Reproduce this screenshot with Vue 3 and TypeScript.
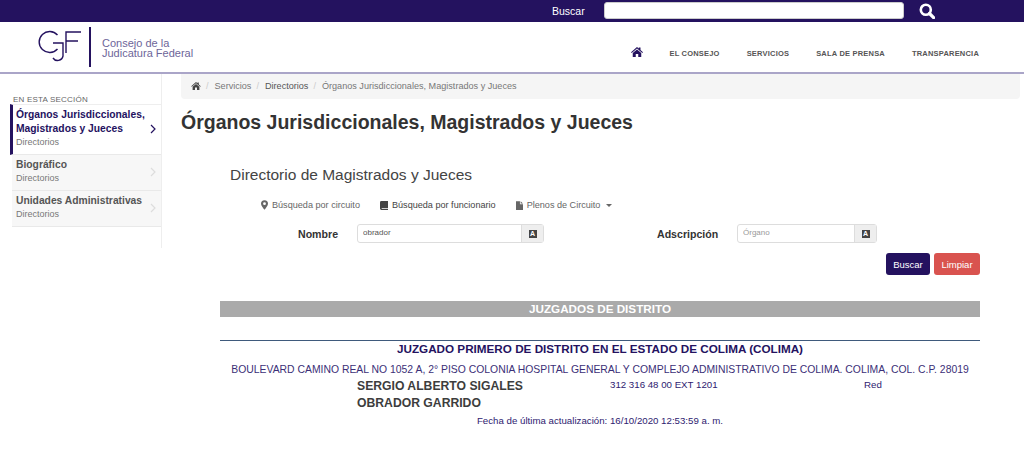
<template>
  <div class="page">
    <!-- Top search bar -->
    <div class="topbar">
      <span class="topbar-label">Buscar</span>
      <input class="topbar-input" type="text" />
      <svg class="topbar-icon" viewBox="0 0 16 16" width="16" height="16">
        <circle cx="6.8" cy="6.8" r="5" fill="none" stroke="#fff" stroke-width="2.6" />
        <path d="M10.5 10.5 L14.6 14.6" stroke="#fff" stroke-width="3.2" stroke-linecap="round" />
      </svg>
    </div>

    <!-- Logo and menu -->
    <header class="header">
      <div class="logo">
        <svg class="logo-mark" viewBox="0 0 46 36" width="46" height="36">
          <path d="M20.5 6 A10.5 10.5 0 1 0 20.5 20 M16 14 H26 V27 A5.5 5.5 0 0 1 16 29" fill="none" stroke="#24125f" stroke-width="1.4" />
          <path d="M29 24 V3 H44 M29 12 H41" fill="none" stroke="#24125f" stroke-width="1.4" />
        </svg>
        <div class="logo-bar"></div>
        <div class="logo-text">Consejo de la<br />Judicatura Federal</div>
      </div>
      <nav class="menu">
        <svg class="menu-home" viewBox="0 0 24 20" width="12" height="10">
          <path d="M12 0 L15.5 3 V1 H19 V6 L24 10.5 L22.6 12 L12 3 L1.4 12 L0 10.5 Z M12 5 L20.5 12 V20 H14.5 V14 H9.5 V20 H3.5 V12 Z" fill="#24125f" />
        </svg>
        <a v-for="item in menu" :key="item" class="menu-item">{{ item }}</a>
      </nav>
    </header>

    <div class="body">
      <!-- Side navigation -->
      <aside class="side">
        <div class="side-title">EN ESTA SECCIÓN</div>
        <div
          v-for="link in links"
          :key="link.name"
          class="side-link"
          :class="{ active: link.active }"
        >
          <div>
            <div class="side-name" v-html="link.name"></div>
            <div class="side-sub">Directorios</div>
          </div>
          <svg class="side-arrow" viewBox="0 0 6 10" width="6" height="10">
            <path d="M1 1 L5 5 L1 9" fill="none" stroke="currentColor" stroke-width="1.2" />
          </svg>
        </div>
      </aside>

      <main class="main">
        <div class="crumbs">
          <svg class="crumb-home" viewBox="0 0 24 20" width="10" height="8">
            <path d="M12 0 L15.5 3 V1 H19 V6 L24 10.5 L22.6 12 L12 3 L1.4 12 L0 10.5 Z M12 5 L20.5 12 V20 H14.5 V14 H9.5 V20 H3.5 V12 Z" fill="#444" />
          </svg>
          <span class="sep">/</span>
          <span>Servicios</span>
          <span class="sep">/</span>
          <span class="dark">Directorios</span>
          <span class="sep">/</span>
          <span>Órganos Jurisdiccionales, Magistrados y Jueces</span>
        </div>

        <h1 class="title">Órganos Jurisdiccionales, Magistrados y Jueces</h1>

        <section class="content">
          <h2 class="subtitle">Directorio de Magistrados y Jueces</h2>

          <div class="tabs">
            <span class="tab">
              <svg viewBox="0 0 8 11" width="7" height="10">
                <path d="M4 0 A4 4 0 0 1 8 4 C8 6 5.5 9 4 11 C2.5 9 0 6 0 4 A4 4 0 0 1 4 0 Z M4 2.4 A1.6 1.6 0 1 0 4 5.6 A1.6 1.6 0 1 0 4 2.4 Z" fill="#666" fill-rule="evenodd" />
              </svg>
              Búsqueda por circuito
            </span>
            <span class="tab strong">
              <svg viewBox="0 0 9 10" width="8" height="9">
                <path d="M1.5 0 H9 V8 H2 A0.8 0.8 0 0 0 2 9 H9 V10 H1.5 A1.5 1.5 0 0 1 0 8.5 V1.5 A1.5 1.5 0 0 1 1.5 0 Z" fill="#444" />
              </svg>
              Búsqueda por funcionario
            </span>
            <span class="tab">
              <svg viewBox="0 0 8 10" width="7" height="9">
                <path d="M0 0 H4.5 V3.5 H8 V10 H0 Z M5.3 0 L8 2.7 H5.3 Z" fill="#666" />
              </svg>
              Plenos de Circuito
              <i class="caret"></i>
            </span>
          </div>

          <div class="form">
            <label class="form-label">Nombre</label>
            <div class="field">
              <input class="field-input" type="text" value="obrador" />
              <span class="field-addon"><b class="az">A</b></span>
            </div>
            <label class="form-label second">Adscripción</label>
            <div class="field">
              <input class="field-input" type="text" placeholder="Órgano" />
              <span class="field-addon"><b class="az">A</b></span>
            </div>
          </div>

          <div class="actions">
            <button class="btn primary">Buscar</button>
            <button class="btn danger">Limpiar</button>
          </div>

          <div class="band">JUZGADOS DE DISTRITO</div>

          <div class="court">
            <h3 class="court-name">JUZGADO PRIMERO DE DISTRITO EN EL ESTADO DE COLIMA (COLIMA)</h3>
            <p class="court-address">BOULEVARD CAMINO REAL NO 1052 A, 2° PISO COLONIA HOSPITAL GENERAL Y COMPLEJO ADMINISTRATIVO DE COLIMA. COLIMA, COL. C.P. 28019</p>
            <div class="person">
              <div class="person-name">SERGIO ALBERTO SIGALES<br />OBRADOR GARRIDO</div>
              <div class="person-phone">312 316 48 00 EXT 1201</div>
              <div class="person-net">Red</div>
            </div>
            <p class="court-date">Fecha de última actualización: 16/10/2020 12:53:59 a. m.</p>
          </div>
        </section>
      </main>
    </div>
  </div>
</template>

<script setup lang="ts">
interface SideLink {
  name: string
  active?: boolean
}

const menu: string[] = ['EL CONSEJO', 'SERVICIOS', 'SALA DE PRENSA', 'TRANSPARENCIA']

const links: SideLink[] = [
  { name: 'Órganos Jurisdiccionales,<br>Magistrados y Jueces', active: true },
  { name: 'Biográfico' },
  { name: 'Unidades Administrativas' }
]
</script>

<style>
html,
body {
  margin: 0;
  background: #fff;
}
</style>

<style scoped>
.page {
  width: 1024px;
  height: 459px;
  overflow: hidden;
  font-family: "Liberation Sans", Arial, sans-serif;
  color: #333;
}

/* Top bar */
.topbar {
  height: 22px;
  background: #24125f;
  display: flex;
  align-items: center;
  padding-left: 552px;
  box-sizing: border-box;
}

.topbar-label {
  width: 52px;
  font-size: 10.5px;
  color: #fff;
}

.topbar-input {
  width: 300px;
  height: 17px;
  box-sizing: border-box;
  border: 1px solid #ccc;
  border-radius: 3px;
  background: #fff;
  padding: 0;
  margin-top: -2px;
}

.topbar-icon {
  margin-left: 15px;
}

/* Header */
.header {
  height: 52px;
  box-sizing: border-box;
  border-bottom: 2px solid #aaa5c8;
  display: flex;
  justify-content: space-between;
  padding-left: 37px;
}

.logo {
  display: flex;
  align-items: flex-start;
  padding-top: 5px;
}

.logo-mark {
  margin-top: 2px;
}

.logo-bar {
  width: 2px;
  height: 40px;
  background: #24125f;
  margin-left: 6px;
}

.logo-text {
  margin: 11px 0 0 11px;
  font-size: 11px;
  line-height: 10px;
  color: #6d6599;
}

.menu {
  display: flex;
  align-items: flex-start;
  padding: 26px 45px 0 0;
}

.menu-home {
  width: 12px;
  height: 10px;
  margin: -1px 26px 0 0;
}

.menu-item {
  font-size: 7.5px;
  line-height: 11px;
  font-weight: bold;
  letter-spacing: 0.2px;
  color: #555;
  margin-left: 27px;
}

.menu-item:first-of-type {
  margin-left: 0;
}

/* Body */
.body {
  display: grid;
  grid-template-columns: 162px 1fr;
}

.side {
  height: 174px;
  box-sizing: border-box;
  border-right: 1px solid #eee;
  padding: 21px 0 0 10px;
}

.side-title {
  margin-left: 3px;
  font-size: 8px;
  line-height: 9px;
  letter-spacing: 0.2px;
  color: #666;
}

.side-link {
  display: flex;
  align-items: center;
  justify-content: space-between;
  box-sizing: border-box;
  height: 36px;
  padding: 0 5px 2px 4px;
  margin-left: 2px;
  background: #f7f7f7;
  border-bottom: 1px solid #e9e9e9;
  color: #ddd;
}

.side-link.active {
  height: 51px;
  margin-left: 0;
  padding-left: 3px;
  background: #fff;
  border-left: 3px solid #24125f;
  border-top: 1px solid #eee;
  color: #24125f;
}

.side-name {
  font-size: 10.3px;
  line-height: 14px;
  font-weight: bold;
  white-space: nowrap;
  color: #555;
}

.active .side-name {
  color: #24125f;
}

.side-sub {
  font-size: 9px;
  line-height: 13px;
  color: #777;
}

/* Main */
.main {
  padding: 0 4px 0 19px;
}

.crumbs {
  height: 25px;
  box-sizing: border-box;
  padding: 0 0 1px 10px;
  background: #f5f5f5;
  border-radius: 0 0 4px 4px;
  display: flex;
  align-items: center;
  font-size: 9.1px;
  color: #777;
}

.dark {
  color: #555;
}

.sep {
  margin: 0 6px 0 5px;
  color: #ccc;
}

.title {
  margin: 11px 0 0;
  font-size: 19.5px;
  line-height: 24px;
  font-weight: bold;
  color: #333;
}

.content {
  width: 760px;
  margin-left: 39px;
}

.subtitle {
  margin: 32px 0 0 10px;
  font-size: 15.5px;
  line-height: 18px;
  font-weight: normal;
  color: #444;
}

.tabs {
  display: flex;
  gap: 20px;
  margin: 14px 0 0 41px;
  font-size: 9.1px;
  line-height: 14px;
  color: #666;
}

.tab {
  display: flex;
  align-items: center;
  gap: 4px;
}

.tab.strong {
  color: #444;
}

.caret {
  width: 0;
  height: 0;
  margin-left: 2px;
  border-top: 3px solid #666;
  border-left: 3px solid transparent;
  border-right: 3px solid transparent;
}

.form {
  display: grid;
  grid-template-columns: 59px 187px 113px 80px 140px;
  align-items: center;
  margin: 12px 0 0 78px;
}

.form-label {
  font-size: 10.6px;
  font-weight: bold;
  color: #333;
}

.second {
  grid-column: 4;
}

.field {
  display: flex;
  height: 19px;
  box-sizing: border-box;
  border: 1px solid #ddd;
  border-radius: 3px;
}

.field-input {
  flex: 1;
  min-width: 0;
  border: 0;
  padding: 0 5px 2px;
  font: 8px "Liberation Sans", Arial, sans-serif;
  color: #555;
  background: transparent;
  outline: none;
}

.field-input::placeholder {
  color: #999;
}

.field-addon {
  width: 21px;
  display: flex;
  align-items: center;
  justify-content: center;
  background: #eee;
  border-left: 1px solid #ddd;
}

.az {
  width: 8px;
  height: 8px;
  display: flex;
  align-items: center;
  justify-content: center;
  background: #444;
  color: #fff;
  font-size: 7px;
  line-height: 8px;
}

.actions {
  display: flex;
  justify-content: flex-end;
  gap: 4px;
  margin-top: 10px;
}

.btn {
  height: 22px;
  padding: 0;
  border-radius: 3px;
  border: 1px solid transparent;
  font: 9.5px "Liberation Sans", Arial, sans-serif;
  color: #fff;
}

.primary {
  width: 44px;
  background: #24125f;
}

.danger {
  width: 46px;
  background: #d9534f;
}

.band {
  margin-top: 26px;
  height: 16px;
  background: #aaa;
  color: #fff;
  font-size: 11.7px;
  line-height: 16px;
  font-weight: bold;
  text-align: center;
}

.court {
  margin-top: 23px;
  border-top: 1px solid #3f5a7c;
}

.court-name {
  margin: 1px 0 0;
  font-size: 11.7px;
  line-height: 14px;
  font-weight: bold;
  color: #24125f;
  text-align: center;
}

.court-address {
  margin: 7px 0 0;
  font-size: 10.4px;
  line-height: 14px;
  color: #3b2f77;
  text-align: center;
  white-space: nowrap;
}

.person {
  display: grid;
  grid-template-columns: 253px 254px 1fr;
  padding-left: 137px;
  margin-top: 1px;
}

.person-name {
  font-size: 12.2px;
  line-height: 17px;
  font-weight: bold;
  color: #3d3d3d;
}

.person-phone,
.person-net {
  font-size: 9.7px;
  line-height: 14px;
  color: #2e2170;
}

.court-date {
  margin: 2px 0 0;
  font-size: 9.7px;
  line-height: 14px;
  color: #2e2170;
  text-align: center;
}
</style>
